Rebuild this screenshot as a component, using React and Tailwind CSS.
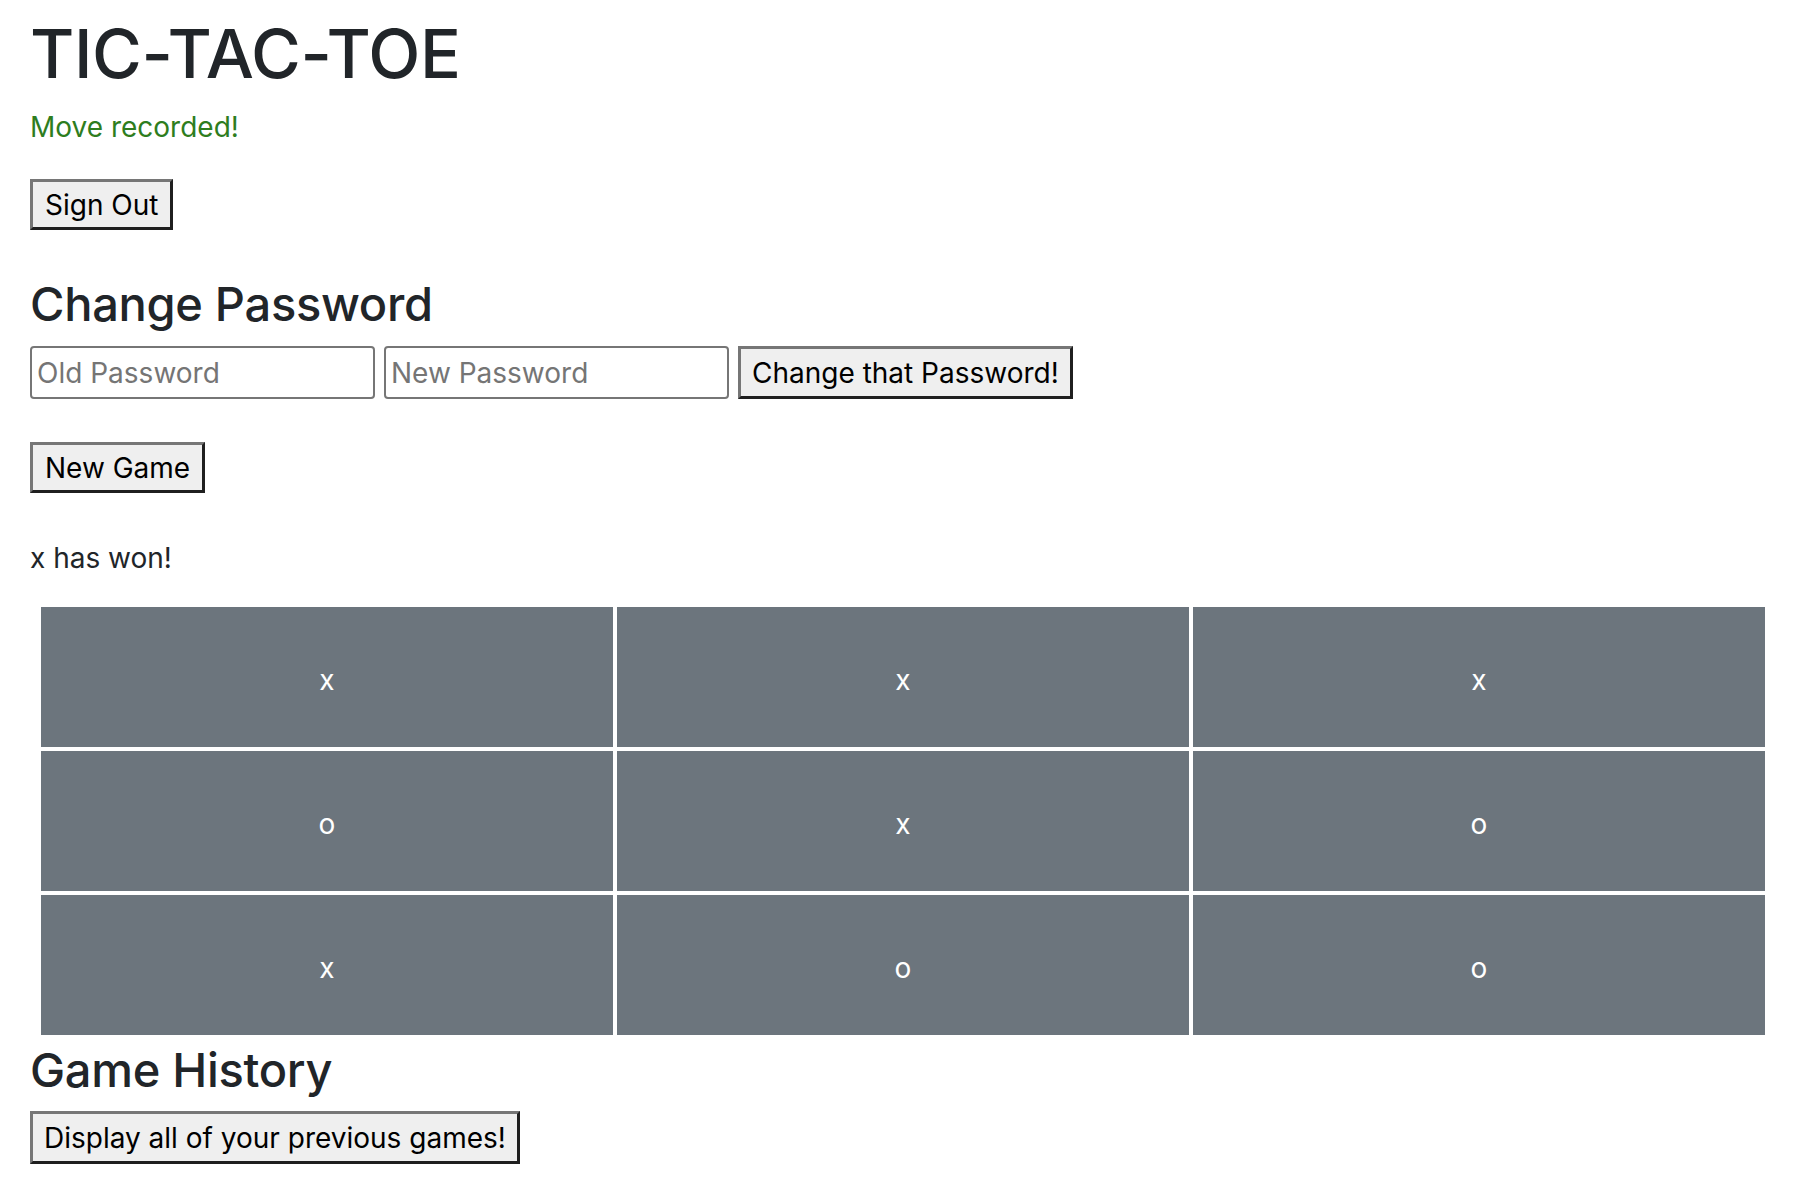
import React from 'react';

const board = ['x', 'x', 'x', 'o', 'x', 'o', 'x', 'o', 'o'];

// plain grey outset button, like the browser default
const Btn = ({ children, className = '' }) => (
    <button
        type="button"
        className={`bg-[#efefef] text-black px-[11px] border-[3px] border-t-[#767676] border-l-[#767676] border-b-[#1f1f1f] border-r-[#1f1f1f] leading-none ${className}`}
    >
        {children}
    </button>
);

const App = () => {
    return (
        <div className="min-h-screen bg-white text-[#212529] pl-[30px] pr-[31px] pt-[13px] font-['Inter','Liberation_Sans',sans-serif] text-[28px]">
            <h1 className="text-[68px] leading-[80px] font-medium tracking-[-0.4px]">TIC-TAC-TOE</h1>
            <p className="mt-[13px] leading-[42px] text-[#2e7d1e]">Move recorded!</p>

            <div className="mt-[31px]">
                <Btn className="h-[51px] px-[12px]">Sign Out</Btn>
            </div>

            {/* Change password form */}
            <h3 className="mt-[45px] text-[47px] leading-[58px] font-medium tracking-[-0.3px]">Change Password</h3>
            <form className="mt-[13px] flex gap-[9px]">
                <input
                    type="password"
                    placeholder="Old Password"
                    className="w-[345px] h-[53px] border-2 border-[#767676] rounded-[4px] pl-[5px] placeholder:text-[#757575] outline-none"
                />
                <input
                    type="password"
                    placeholder="New Password"
                    className="w-[345px] h-[53px] border-2 border-[#767676] rounded-[4px] pl-[5px] placeholder:text-[#757575] outline-none"
                />
                <Btn className="h-[53px]">Change that Password!</Btn>
            </form>

            <div className="mt-[43px]">
                <Btn className="h-[51px] px-[12px]">New Game</Btn>
            </div>

            <p className="mt-[44px] leading-[42px]">x has won!</p>

            {/* Board */}
            <div className="mt-[28px] ml-[11px] grid grid-cols-3 gap-[4px]">
                {board.map((cell, i) => (
                    <div key={i} className="h-[140px] pt-[6px] bg-[#6c757d] text-white flex items-center justify-center">
                        {cell}
                    </div>
                ))}
            </div>

            <h3 className="mt-[6px] text-[47px] leading-[58px] font-medium tracking-[-0.3px]">Game History</h3>
            <div className="mt-[12px]">
                <Btn className="h-[53px]">Display all of your previous games!</Btn>
            </div>
        </div>
    );
};

export default App;
